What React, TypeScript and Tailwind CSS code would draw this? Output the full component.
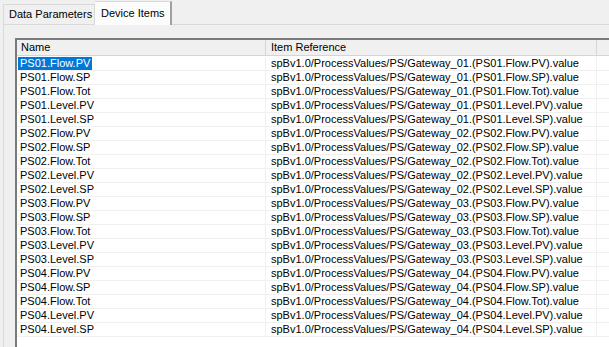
const rows = [
  "PS01.Flow.PV",
  "PS01.Flow.SP",
  "PS01.Flow.Tot",
  "PS01.Level.PV",
  "PS01.Level.SP",
  "PS02.Flow.PV",
  "PS02.Flow.SP",
  "PS02.Flow.Tot",
  "PS02.Level.PV",
  "PS02.Level.SP",
  "PS03.Flow.PV",
  "PS03.Flow.SP",
  "PS03.Flow.Tot",
  "PS03.Level.PV",
  "PS03.Level.SP",
  "PS04.Flow.PV",
  "PS04.Flow.SP",
  "PS04.Flow.Tot",
  "PS04.Level.PV",
  "PS04.Level.SP",
];

const gateway = (name: string) =>
  `spBv1.0/ProcessValues/PS/Gateway_${name.slice(2, 4)}.(${name}).value`;

export default function App() {
  return (
    <div
      className="w-[609px] h-[347px] overflow-hidden bg-[#f0f0f0] text-[11px] text-black flex flex-col"
      style={{ fontFamily: '"Liberation Sans", Arial, sans-serif' }}
    >
      {/* Tabs */}
      <div className="flex items-end h-[24px] pl-[3px] shrink-0 relative z-10">
        <div className="h-[20px] w-[92px] pl-[5px] flex items-center border border-b-0 border-[#d9d9d9] bg-[#f0f0f0] leading-none">
          Data Parameters
        </div>
        <div className="h-[24px] w-[77px] -mb-px pl-[6px] flex items-center border border-b-0 border-l-0 border-r-2 border-[#a0a0a0] border-t-[#d9d9d9] bg-[#fcfcfc] leading-none">
          Device Items
        </div>
      </div>

      {/* Panel */}
      <div className="flex-1 ml-[3px] border-l border-t border-[#d9d9d9] bg-[#f0f0f0] pl-[11px] pt-[13px]">
        <div className="h-full border-l-2 border-t-2 border-l-[#7a7a7a] border-t-[#7a7a7a] bg-white">
          {/* Header */}
          <div className="flex h-[16px] bg-[#f0f0f0] border-b border-[#d5d5d5]">
            <div className="w-[249px] pl-[4px] flex items-center border-r border-[#d5d5d5]">Name</div>
            <div className="w-[331px] pl-[5px] flex items-center border-r border-[#d5d5d5]">Item Reference</div>
            <div className="flex-1" />
          </div>
          {/* Rows */}
          <div className="flex flex-col pt-px">
            {rows.map((r, i) => (
              <div key={r} className="flex h-[14px] border-b border-[#f0f0f0]">
                <div className="w-[249px] pl-[1px] flex items-center border-r border-[#f0f0f0]">
                  <span
                    className={
                      i === 0
                        ? "bg-[#0078d7] text-white px-[2px] leading-[13px]"
                        : "px-[2px] leading-[13px]"
                    }
                  >
                    {r}
                  </span>
                </div>
                <div className="w-[331px] pl-[5px] flex items-center border-r border-[#f0f0f0] leading-[13px] whitespace-nowrap">
                  {gateway(r)}
                </div>
                <div className="flex-1" />
              </div>
            ))}
          </div>
        </div>
      </div>
    </div>
  );
}
